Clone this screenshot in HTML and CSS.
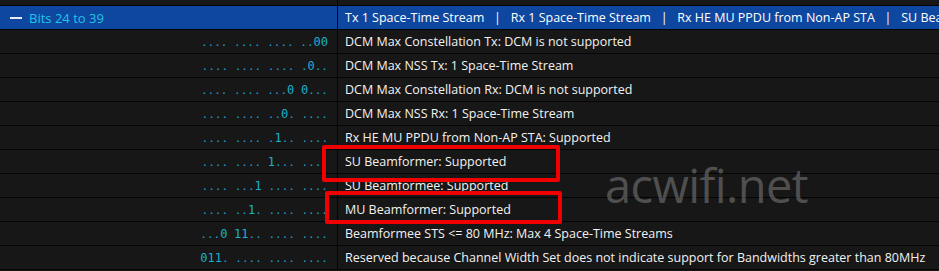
FILE: index.html
```html
<!DOCTYPE html>
<html>
<head>
<meta charset="utf-8">
<link rel="stylesheet" href="styles.css">
</head>
<body>
<div class="tree">
  <div class="row stub"><div class="bits"></div><div class="desc"></div></div>
  <div class="row head">
    <div class="bits"><span class="dash"></span><span class="label">Bits 24 to 39</span></div>
    <div class="desc">Tx 1 Space-Time Stream &nbsp;&nbsp;|&nbsp;&nbsp; Rx 1 Space-Time Stream &nbsp;&nbsp;|&nbsp;&nbsp; Rx HE MU PPDU from Non-AP STA &nbsp;&nbsp;|&nbsp;&nbsp; SU Beamformer: Supported</div>
  </div>
  <div class="row"><div class="bits"><span>.... .... .... ..<b>00</b></span></div><div class="desc">DCM Max Constellation Tx: DCM is not supported</div></div>
  <div class="row"><div class="bits"><span>.... .... .... .<b>0</b>..</span></div><div class="desc">DCM Max NSS Tx: 1 Space-Time Stream</div></div>
  <div class="row"><div class="bits"><span>.... .... ...<b>0</b> <b>0</b>...</span></div><div class="desc">DCM Max Constellation Rx: DCM is not supported</div></div>
  <div class="row"><div class="bits"><span>.... .... ..<b>0</b>. ....</span></div><div class="desc">DCM Max NSS Rx: 1 Space-Time Stream</div></div>
  <div class="row"><div class="bits"><span>.... .... .<b>1</b>.. ....</span></div><div class="desc">Rx HE MU PPDU from Non-AP STA: Supported</div></div>
  <div class="row"><div class="bits"><span>.... .... <b>1</b>... ....</span></div><div class="desc">SU Beamformer: Supported</div></div>
  <div class="row"><div class="bits"><span>.... ...<b>1</b> .... ....</span></div><div class="desc">SU Beamformee: Supported</div></div>
  <div class="row"><div class="bits"><span>.... ..<b>1</b>. .... ....</span></div><div class="desc">MU Beamformer: Supported</div></div>
  <div class="row"><div class="bits"><span>...<b>0</b> <b>11</b>.. .... ....</span></div><div class="desc">Beamformee STS &lt;= 80 MHz: Max 4 Space-Time Streams</div></div>
  <div class="row"><div class="bits"><span><b>011</b>. .... .... ....</span></div><div class="desc">Reserved because Channel Width Set does not indicate support for Bandwidths greater than 80MHz</div></div>
  <div class="mark box1"></div>
  <div class="mark box2"></div>
  <div class="watermark">acwifi.net</div>
</div>
</body>
</html>
```
FILE: styles.css
```css
html, body {
  margin: 0;
  padding: 0;
  background: #171717;
  overflow: hidden;
}
.tree {
  position: relative;
  width: 939px;
  height: 271px;
  overflow: hidden;
  font-family: "Open Sans", "Noto Sans", sans-serif;
  font-size: 12.5px;
  color: #f2f2f2;
}
.row {
  display: flex;
  height: 23px;
  border-bottom: 1px solid #050505;
  background: #171717;
}
.row.stub {
  height: 5px;
}
.bits {
  width: 338px;
  flex: none;
  box-sizing: border-box;
  border-right: 1px solid #050505;
  padding-right: 9px;
  display: flex;
  align-items: center;
  justify-content: flex-end;
  font-family: "DejaVu Sans Mono", "Liberation Mono", monospace;
  font-size: 11px;
  color: #1b9fcc;
  white-space: pre;
}
.bits b {
  font-weight: normal;
  font-size: 12px;
  color: #1ab0cc;
}
.desc {
  flex: 1;
  padding-left: 7px;
  display: flex;
  align-items: center;
  white-space: nowrap;
  overflow: hidden;
}
.row.head {
  background: #0d479f;
}
.row.head .bits {
  justify-content: flex-start;
  padding-left: 10px;
  font-family: "Open Sans", "Noto Sans", sans-serif;
  font-size: 13px;
  color: #22c4e6;
}
.dash {
  width: 12px;
  height: 2px;
  background: #e8eef8;
  margin-right: 7px;
}
.row.head .desc {
  color: #ffffff;
}
.mark {
  position: absolute;
  border: 4px solid #f00000;
  border-radius: 2px;
  box-sizing: border-box;
}
.box1 {
  left: 322px;
  top: 145px;
  width: 238px;
  height: 37px;
}
.box2 {
  left: 325px;
  top: 191px;
  width: 237px;
  height: 33px;
}
.watermark {
  position: absolute;
  left: 605px;
  top: 153px;
  font-family: "Open Sans", "Noto Sans", sans-serif;
  font-size: 47px;
  color: rgba(130, 130, 130, 0.55);
  letter-spacing: -0.6px;
}
```
